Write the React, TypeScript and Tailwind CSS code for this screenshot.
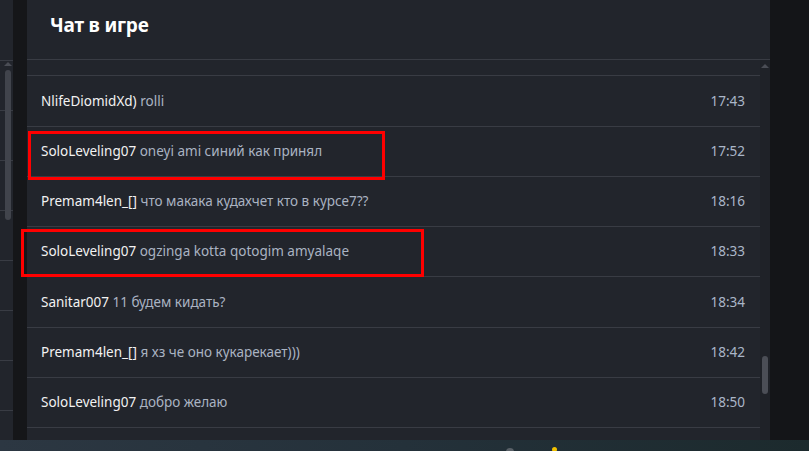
const messages = [
  { user: 'NlifeDiomidXd)', text: 'rolli', time: '17:43', h: 'h-[51px]' },
  { user: 'SoloLeveling07', text: 'oneyi ami синий как принял', time: '17:52', h: 'h-[50px]' },
  { user: 'Premam4len_[]', text: 'что макака кудахчет кто в курсе7??', time: '18:16', h: 'h-[50px]' },
  { user: 'SoloLeveling07', text: 'ogzinga kotta qotogim amyalaqe', time: '18:33', h: 'h-[50px]' },
  { user: 'Sanitar007', text: '11 будем кидать?', time: '18:34', h: 'h-[51px]' },
  { user: 'Premam4len_[]', text: 'я хз че оно кукарекает)))', time: '18:42', h: 'h-[50px]' },
  { user: 'SoloLeveling07', text: 'добро желаю', time: '18:50', h: 'h-[50px]' },
];

const font = { fontFamily: '"Noto Sans", "Open Sans", sans-serif' };

const Arrow = () => (
  <div className="w-0 h-0 border-l-[4px] border-r-[4px] border-b-[4px] border-l-transparent border-r-transparent border-b-[#4a4d55]" />
);

export default function App() {
  return (
    <div className="relative w-[809px] h-[451px] overflow-hidden bg-[#141518] flex flex-col font-['Noto_Sans',sans-serif]">
      <div className="flex h-[440px]">
        {/* neighbouring window edge */}
        <div className="relative w-[13px] bg-[#22252c] flex flex-col">
          <div className="h-[61px] border-b border-[#393c44]" />
          {[0, 1, 2, 3, 4, 5, 6].map(i => (
            <div key={i} className="h-[50px] border-b border-[#393c44] shrink-0" />
          ))}
          <div className="absolute left-[4px] top-[62px] flex flex-col items-center gap-[4px]">
            <Arrow />
            <div className="w-[6px] h-[150px] rounded-full bg-[#41444c]" />
          </div>
        </div>
        <div className="w-[14px] bg-[#151619]" />

        {/* chat panel */}
        <div className="w-[743px] bg-[#22252c] flex flex-col">
          <div className="h-[60px] shrink-0 border-b border-[#393c44] flex items-center pl-[23px] pb-[9px]">
            <h2 className="text-[19px] font-bold text-white tracking-[-0.2px]">Чат в игре</h2>
          </div>
          <div className="flex flex-1 min-h-0">
            <div className="w-[733px] flex flex-col overflow-hidden">
              <div className="h-[16px] shrink-0 border-b border-[#393c44]" />
              {messages.map((m, i) => (
                <div
                  key={i}
                  className={`${m.h} shrink-0 border-b border-[#393c44] flex items-center justify-between pl-[14px] pr-[15px] text-[13.5px]`}
                  style={font}
                >
                  <div className="whitespace-nowrap">
                    <span className="text-[#f2f2f2]">{m.user}</span>{' '}
                    <span className="text-[#aab3c2]">{m.text}</span>
                  </div>
                  <span className="text-[#aab6c8]">{m.time}</span>
                </div>
              ))}
            </div>
            <div className="relative w-[10px] bg-[#1f2228]">
              <div className="absolute left-[1px] top-[4px]">
                <Arrow />
              </div>
              <div className="absolute left-[2px] top-[296px] w-[6px] h-[38px] rounded-full bg-[#4b4e56]" />
            </div>
          </div>
        </div>
        <div className="flex-1 bg-[#141518]" />
      </div>

      {/* taskbar strip */}
      <div className="relative h-[11px] bg-gradient-to-r from-[#2c3742] via-[#24313a] to-[#1c2a2d]">
        <div className="absolute left-[506px] top-[8px] w-[8px] h-[8px] rounded-full bg-[#5a6168]" />
        <div className="absolute left-[552px] top-[7px] w-[5px] h-[5px] rounded-full bg-[#f2c200]" />
      </div>

      {/* annotation boxes */}
      <div className="absolute left-[28px] top-[131px] w-[357px] h-[49px] border-[3px] border-[#ff0000]" />
      <div className="absolute left-[21px] top-[229px] w-[403px] h-[48px] border-[3px] border-[#ff0000]" />
    </div>
  );
}
